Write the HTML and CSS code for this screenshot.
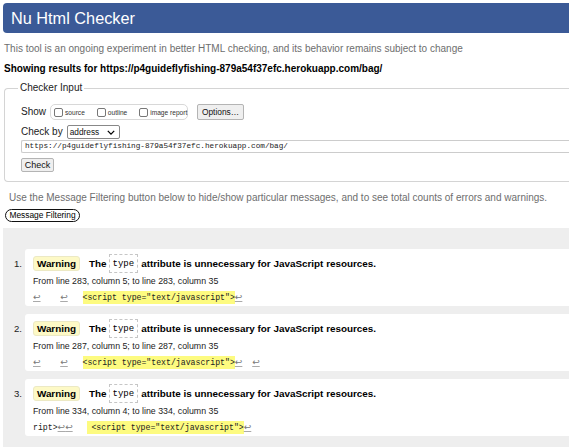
FILE: index.html
```html
<!DOCTYPE html>
<html lang="en">
<head>
<meta charset="utf-8">
<title>Nu Html Checker</title>
<link rel="stylesheet" href="styles.css">
</head>
<body>
<header class="brand">Nu Html Checker</header>
<p class="intro">This tool is an ongoing experiment in better HTML checking, and its behavior remains subject to change</p>
<p class="showing">Showing results for https://p4guideflyfishing-879a54f37efc.herokuapp.com/bag/</p>
<fieldset class="checker">
  <legend>Checker Input</legend>
  <div class="show-row">
    <span class="lbl">Show</span>
    <span class="opts">
      <label class="opt"><span class="cb"></span>source</label>
      <label class="opt"><span class="cb"></span>outline</label>
      <label class="opt"><span class="cb"></span>image report</label>
    </span>
    <span class="btn options">Options…</span>
  </div>
  <div class="by-row">
    <span class="lbl">Check by</span>
    <span class="select">address<svg class="chev" viewBox="0 0 10 6" width="8" height="5"><path d="M1 1 L5 5 L9 1" fill="none" stroke="#000" stroke-width="1.6"/></svg></span>
  </div>
  <div class="url">https://p4guideflyfishing-879a54f37efc.herokuapp.com/bag/</div>
  <span class="btn check">Check</span>
</fieldset>
<p class="filter-note">Use the Message Filtering button below to hide/show particular messages, and to see total counts of errors and warnings.</p>
<span class="filter-btn">Message Filtering</span>
<ol class="results">
  <li class="msg">
    <span class="num">1.</span>
    <div class="card">
      <div class="title"><span class="badge">Warning</span><span class="t">The</span><code class="attr">type</code><span class="t">attribute is unnecessary for JavaScript resources.</span></div>
      <div class="loc">From line 283, column 5; to line 283, column 35</div>
      <div class="extract"><span class="lf">↩</span>    <span class="lf">↩</span>   <mark>&lt;script type="text/javascript"&gt;</mark><span class="lf">↩</span></div>
    </div>
  </li>
  <li class="msg">
    <span class="num">2.</span>
    <div class="card">
      <div class="title"><span class="badge">Warning</span><span class="t">The</span><code class="attr">type</code><span class="t">attribute is unnecessary for JavaScript resources.</span></div>
      <div class="loc">From line 287, column 5; to line 287, column 35</div>
      <div class="extract"><span class="lf">↩</span>    <span class="lf">↩</span>   <mark>&lt;script type="text/javascript"&gt;</mark><span class="lf">↩</span>  <span class="lf">↩</span></div>
    </div>
  </li>
  <li class="msg">
    <span class="num">3.</span>
    <div class="card">
      <div class="title"><span class="badge">Warning</span><span class="t">The</span><code class="attr">type</code><span class="t">attribute is unnecessary for JavaScript resources.</span></div>
      <div class="loc">From line 334, column 4; to line 334, column 35</div>
      <div class="extract">ript&gt;<span class="lf">↩</span><span class="lf">↩</span>   <mark class="wide">&lt;script type="text/javascript"&gt;</mark><span class="lf">↩</span></div>
    </div>
  </li>
</ol>
</body>
</html>
```

FILE: styles.css
```css
html, body {
  margin: 0;
  padding: 0;
  overflow: hidden;
  background: #fff;
}
body {
  font-family: "Liberation Sans", Arial, sans-serif;
  color: #000;
  width: 569px;
  height: 447px;
}
.brand {
  display: block;
  margin: 3px 0 0 3px;
  height: 30px;
  line-height: 30px;
  padding-left: 8px;
  background: #3b5a97;
  color: #fff;
  font-size: 16.3px;
  border-radius: 4px 0 0 4px;
}
.intro {
  margin: 10px 0 0 4px;
  font-size: 10px;
  line-height: 12px;
  color: #6e6e6e;
}
.showing {
  margin: 8px 0 0 4px;
  font-size: 10px;
  line-height: 12px;
  font-weight: bold;
}
.checker {
  margin: 7px 0 0 4px;
  border: 1px solid #d4d4d4;
  border-right: 0;
  border-radius: 4px 0 0 4px;
  padding: 0 0 9px 16px;
  min-width: 0;
}
.checker legend {
  margin-left: -3px;
  padding: 0 2px;
  font-size: 10px;
  line-height: 12px;
  color: #222;
}
.show-row {
  display: flex;
  align-items: center;
  margin-top: 10px;
  height: 16px;
}
.lbl {
  font-size: 10px;
  line-height: 12px;
  color: #222;
  white-space: nowrap;
}
.opts {
  display: flex;
  align-items: center;
  margin-left: 4px;
  height: 14px;
  width: 133px;
  border: 1px solid #d8d8d8;
  border-radius: 5px;
  padding-left: 3px;
  gap: 12px;
}
.opt {
  display: flex;
  align-items: center;
  font-size: 6.6px;
  color: #333;
  white-space: nowrap;
}
.cb {
  display: inline-block;
  width: 7px;
  height: 7px;
  border: 1px solid #777;
  border-radius: 2px;
  margin-right: 2px;
  background: #fff;
}
.btn {
  display: inline-flex;
  align-items: center;
  justify-content: center;
  border: 1px solid #b4b4b4;
  background: #efefef;
  border-radius: 2px;
  color: #111;
  box-sizing: border-box;
  white-space: nowrap;
}
.options {
  margin-left: 9px;
  width: 47px;
  height: 16px;
  font-size: 8.4px;
}
.by-row {
  display: flex;
  align-items: center;
  margin-top: 5px;
  height: 14px;
}
.select {
  display: inline-flex;
  align-items: center;
  justify-content: space-between;
  box-sizing: border-box;
  margin-left: 4px;
  width: 53px;
  height: 14px;
  padding: 0 4px 0 2px;
  border: 1px solid #888;
  border-radius: 2px;
  font-size: 8.3px;
  color: #111;
}
.url {
  margin-top: 1px;
  height: 13px;
  box-sizing: border-box;
  border: 1px solid #ccc;
  border-right: 0;
  border-radius: 2px 0 0 2px;
  padding-left: 3px;
  font-family: "Liberation Mono", "DejaVu Sans Mono", monospace;
  font-size: 7.7px;
  line-height: 11px;
  color: #222;
  white-space: nowrap;
}
.check {
  margin-top: 5px;
  width: 33px;
  height: 14px;
  font-size: 9px;
}
.filter-note {
  margin: 10px 0 0 9px;
  font-size: 10px;
  line-height: 12px;
  color: #6e6e6e;
}
.filter-btn {
  display: inline-block;
  margin: 5px 0 0 5px;
  box-sizing: border-box;
  width: 75px;
  height: 13px;
  line-height: 10px;
  text-align: center;
  border: 1.5px solid #111;
  border-radius: 7px;
  font-size: 8.4px;
  color: #000;
  vertical-align: top;
}
.results {
  list-style: none;
  margin: 6px 0 0 3px;
  padding: 21px 0 12px 0;
  background: #eee;
  display: flex;
  flex-direction: column;
  gap: 8px;
}
.msg {
  display: flex;
  align-items: flex-start;
}
.num {
  width: 19px;
  text-align: right;
  padding-right: 3px;
  padding-top: 9px;
  font-size: 9.6px;
  line-height: 12px;
  color: #222;
}
.card {
  flex: 1;
  background: #fff;
  border-radius: 3px 0 0 3px;
  padding: 5px 0 2px 8px;
  height: 50px;
}
.title {
  display: flex;
  align-items: center;
  height: 19px;
  font-size: 9.9px;
  font-weight: bold;
  white-space: nowrap;
}
.badge {
  display: inline-block;
  box-sizing: border-box;
  height: 15px;
  line-height: 13px;
  width: 47px;
  text-align: center;
  background: #fdf9c6;
  border: 1px solid #ece9c4;
  border-radius: 3px;
}
.t {
  margin-left: 9px;
}
.attr {
  display: inline-flex;
  align-items: center;
  box-sizing: border-box;
  height: 19px;
  margin-left: 2px;
  margin-right: -5px;
  padding: 0 3px;
  border: 1px dashed #c6c6c6;
  font-family: "Liberation Mono", "DejaVu Sans Mono", monospace;
  font-size: 9px;
  font-weight: normal;
}
.attr + .t {
  margin-left: 8px;
}
.loc {
  margin-top: 2px;
  font-size: 8.8px;
  line-height: 12px;
  color: #222;
}
.extract {
  margin-top: 3px;
  height: 14px;
  line-height: 14px;
  white-space: pre;
  font-family: "Liberation Mono", "DejaVu Sans Mono", monospace;
  font-size: 8.2px;
  color: #222;
}
.lf {
  font-family: "DejaVu Sans", sans-serif;
  font-size: 9px;
  color: #777;
  text-decoration: underline;
  text-decoration-color: #aaa;
}
mark {
  background: #fdfb80;
  color: #222;
  padding: 2px 0;
}
mark.wide {
  padding: 2px 0 2px 4px;
}
```
